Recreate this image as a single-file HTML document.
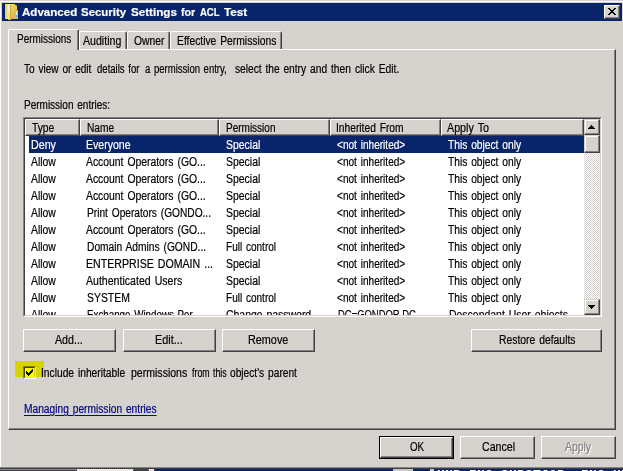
<!DOCTYPE html>
<html lang="en"><head><meta charset="utf-8"><title>Advanced Security Settings for ACL Test</title>
<style>
html,body{margin:0;padding:0}
body{width:623px;height:471px;overflow:hidden;position:relative;background:#D6D3CE;font-family:"Liberation Sans",sans-serif;font-size:11px;color:#000}
.a{position:absolute}
.t{position:absolute;white-space:pre;height:14px;line-height:14px;font-size:12px;transform-origin:0 0;word-spacing:1.2px;-webkit-text-stroke:0.2px currentColor}
.btn{position:absolute;box-sizing:border-box;background:#D6D3CE;border:1px solid;border-color:#fff #424142 #424142 #fff;box-shadow:inset -1px -1px 0 #848284}
.tab{position:absolute;box-sizing:border-box;background:#D6D3CE}
</style></head><body>
<!-- window frame -->
<div class="a" style="left:0;top:1px;width:623px;height:1px;background:#fff"></div>
<div class="a" style="left:0;top:1px;width:1px;height:466px;background:#fff"></div>
<!-- title bar -->
<div class="a" style="left:2px;top:3px;width:620px;height:18px;background:#08246B"></div>
<svg class="a" style="left:4px;top:3px" width="16" height="18" viewBox="4 3 16 18" shape-rendering="crispEdges">
<defs><linearGradient id="fl" x1="0" y1="0" x2="1" y2="0"><stop offset="0" stop-color="#E6C45A"/><stop offset="0.5" stop-color="#F9E58E"/><stop offset="1" stop-color="#F3DA78"/></linearGradient>
<linearGradient id="fr" x1="0" y1="0" x2="0.6" y2="1"><stop offset="0" stop-color="#F2D670"/><stop offset="1" stop-color="#DDB644"/></linearGradient></defs>
<rect x="5" y="4" width="6" height="15" fill="url(#fl)"/>
<rect x="11" y="4" width="6" height="15" fill="url(#fr)"/>
<rect x="15" y="4" width="2" height="1" fill="#08246B"/>
<rect x="16" y="5" width="1" height="1" fill="#9C8A4A"/>
<rect x="10" y="5" width="1" height="14" fill="#CDA83E"/>
<rect x="8" y="5" width="1" height="6" fill="#FFFBE4"/>
<rect x="9" y="6" width="1" height="8" fill="#FBEFB0"/>
<rect x="17" y="10" width="1" height="9" fill="#E3BF4E"/>
<rect x="8" y="19" width="3" height="1" fill="#D9B444"/>
<rect x="16" y="12" width="1" height="3" fill="#FFFFFF"/>
<rect x="16" y="15" width="1" height="2" fill="#4AA6E8"/>
</svg>
<!-- close button -->
<div class="btn" style="left:604px;top:5px;width:16px;height:14px"></div>
<svg class="a" style="left:608px;top:8px" width="8" height="7" viewBox="0 0 8 7"><path d="M0 0h2v1h1v1h2v-1h1v-1h2v1h-1v1h-1v1h-1v1h1v1h1v1h1v1h-2v-1h-1v-1h-2v1h-1v1h-2v-1h1v-1h1v-1h1v-1h-1v-1h-1v-1h-1z" fill="#000"/></svg>

<!-- tab panel -->
<div class="a" style="left:8px;top:49px;width:608px;height:381px;box-sizing:border-box;border:1px solid;border-color:#fff #424142 #424142 #fff;box-shadow:inset -1px -1px 0 #848284"></div>
<!-- unselected tabs -->
<div class="tab" style="left:79px;top:31px;width:48px;height:18px;border-top:1px solid #fff;border-left:1px solid #fff;border-right:1px solid #424142;box-shadow:inset -1px 0 0 #848284;border-radius:2px 2px 0 0"></div>
<div class="tab" style="left:127px;top:31px;width:43px;height:18px;border-top:1px solid #fff;border-left:1px solid #fff;border-right:1px solid #424142;box-shadow:inset -1px 0 0 #848284;border-radius:2px 2px 0 0"></div>
<div class="tab" style="left:170px;top:31px;width:112px;height:18px;border-top:1px solid #fff;border-left:1px solid #fff;border-right:1px solid #424142;box-shadow:inset -1px 0 0 #848284;border-radius:2px 2px 0 0"></div>
<!-- selected tab -->
<div class="tab" style="left:8px;top:29px;width:71px;height:21px;border-top:1px solid #fff;border-left:1px solid #fff;border-right:1px solid #424142;box-shadow:inset -1px 0 0 #848284;border-radius:2px 2px 0 0"></div>

<!-- list view -->
<div class="a" style="left:23px;top:117px;width:579px;height:200px;box-sizing:border-box;border:1px solid;border-color:#848284 #fff #fff #848284;background:#fff">
 <div class="a" style="left:0;top:0;width:577px;height:198px;box-sizing:border-box;border:1px solid;border-color:#424142 #D6D3CE #D6D3CE #424142;overflow:hidden">
  <div id="lv" class="a" style="left:0;top:0;width:575px;height:196px;overflow:hidden;background:#fff">
   <!-- header -->
   <div class="btn" style="left:0;top:0;width:55px;height:17px"></div>
   <div class="btn" style="left:55px;top:0;width:139px;height:17px"></div>
   <div class="btn" style="left:194px;top:0;width:111px;height:17px"></div>
   <div class="btn" style="left:305px;top:0;width:111px;height:17px"></div>
   <div class="btn" style="left:416px;top:0;width:143px;height:17px"></div>
   <!-- selected row -->
   <div class="a" style="left:4px;top:17px;width:555px;height:17px;background:#08246B"></div>
   <!-- scrollbar -->
   <div class="a" style="left:559px;top:0;width:16px;height:196px;background:#fff;background-image:conic-gradient(#D6D3CE 25%,#fff 0 50%,#D6D3CE 0 75%,#fff 0);background-size:2px 2px"></div>
   <div class="btn sb" style="left:559px;top:0;width:16px;height:16px;border-color:#D6D3CE #424142 #424142 #D6D3CE;box-shadow:inset -1px -1px 0 #848284,inset 1px 1px 0 #fff"></div>
   <div class="btn sb" style="left:559px;top:16px;width:16px;height:18px;border-color:#D6D3CE #424142 #424142 #D6D3CE;box-shadow:inset -1px -1px 0 #848284,inset 1px 1px 0 #fff"></div>
   <div class="btn sb" style="left:559px;top:180px;width:16px;height:16px;border-color:#D6D3CE #424142 #424142 #D6D3CE;box-shadow:inset -1px -1px 0 #848284,inset 1px 1px 0 #fff"></div>
   <svg class="a" style="left:563px;top:6px" width="7" height="4" viewBox="0 0 7 4"><path d="M3 0h1v1h1v1h1v1h1v1h-7v-1h1v-1h1v-1h1z" fill="#000"/></svg>
   <svg class="a" style="left:563px;top:186px" width="7" height="4" viewBox="0 0 7 4"><path d="M0 0h7v1h-1v1h-1v1h-1v1h-1v-1h-1v-1h-1v-1h-1z" fill="#000"/></svg>
<span class="t" style="left:7.3px;top:2px;transform:scaleX(0.8572);">Type</span>
<span class="t" style="left:62px;top:2px;transform:scaleX(0.8492);">Name</span>
<span class="t" style="left:201px;top:2px;transform:scaleX(0.8335);">Permission</span>
<span class="t" style="left:311px;top:2px;transform:scaleX(0.8526);">Inherited From</span>
<span class="t" style="left:422px;top:2px;transform:scaleX(0.8936);">Apply To</span>
<span class="t" style="left:6px;top:19px;transform:scaleX(0.8889);color:#fff;">Deny</span>
<span class="t" style="left:61px;top:19px;transform:scaleX(0.88);color:#fff;">Everyone</span>
<span class="t" style="left:201px;top:19px;transform:scaleX(0.8718);color:#fff;">Special</span>
<span class="t" style="left:312px;top:19px;transform:scaleX(0.8395);color:#fff;">&lt;not inherited&gt;</span>
<span class="t" style="left:423.2px;top:19px;transform:scaleX(0.8516);color:#fff;">This object only</span>
<span class="t" style="left:6px;top:36px;transform:scaleX(0.8621);">Allow</span>
<span class="t" style="left:61px;top:36px;transform:scaleX(0.8643);">Account Operators (GO...</span>
<span class="t" style="left:201px;top:36px;transform:scaleX(0.8718);">Special</span>
<span class="t" style="left:312px;top:36px;transform:scaleX(0.8395);">&lt;not inherited&gt;</span>
<span class="t" style="left:423.2px;top:36px;transform:scaleX(0.8516);">This object only</span>
<span class="t" style="left:6px;top:53px;transform:scaleX(0.8621);">Allow</span>
<span class="t" style="left:61px;top:53px;transform:scaleX(0.8643);">Account Operators (GO...</span>
<span class="t" style="left:201px;top:53px;transform:scaleX(0.8718);">Special</span>
<span class="t" style="left:312px;top:53px;transform:scaleX(0.8395);">&lt;not inherited&gt;</span>
<span class="t" style="left:423.2px;top:53px;transform:scaleX(0.8516);">This object only</span>
<span class="t" style="left:6px;top:70px;transform:scaleX(0.8621);">Allow</span>
<span class="t" style="left:61px;top:70px;transform:scaleX(0.8643);">Account Operators (GO...</span>
<span class="t" style="left:201px;top:70px;transform:scaleX(0.8718);">Special</span>
<span class="t" style="left:312px;top:70px;transform:scaleX(0.8395);">&lt;not inherited&gt;</span>
<span class="t" style="left:423.2px;top:70px;transform:scaleX(0.8516);">This object only</span>
<span class="t" style="left:6px;top:87px;transform:scaleX(0.8621);">Allow</span>
<span class="t" style="left:62px;top:87px;transform:scaleX(0.8469);">Print Operators (GONDO...</span>
<span class="t" style="left:201px;top:87px;transform:scaleX(0.8718);">Special</span>
<span class="t" style="left:312px;top:87px;transform:scaleX(0.8395);">&lt;not inherited&gt;</span>
<span class="t" style="left:423.2px;top:87px;transform:scaleX(0.8516);">This object only</span>
<span class="t" style="left:6px;top:104px;transform:scaleX(0.8621);">Allow</span>
<span class="t" style="left:61px;top:104px;transform:scaleX(0.8643);">Account Operators (GO...</span>
<span class="t" style="left:201px;top:104px;transform:scaleX(0.8718);">Special</span>
<span class="t" style="left:312px;top:104px;transform:scaleX(0.8395);">&lt;not inherited&gt;</span>
<span class="t" style="left:423.2px;top:104px;transform:scaleX(0.8516);">This object only</span>
<span class="t" style="left:6px;top:121px;transform:scaleX(0.8621);">Allow</span>
<span class="t" style="left:62px;top:121px;transform:scaleX(0.8519);">Domain Admins (GOND...</span>
<span class="t" style="left:201px;top:121px;transform:scaleX(0.8358);">Full control</span>
<span class="t" style="left:312px;top:121px;transform:scaleX(0.8395);">&lt;not inherited&gt;</span>
<span class="t" style="left:423.2px;top:121px;transform:scaleX(0.8516);">This object only</span>
<span class="t" style="left:6px;top:138px;transform:scaleX(0.8621);">Allow</span>
<span class="t" style="left:61px;top:138px;transform:scaleX(0.8839);">ENTERPRISE DOMAIN ...</span>
<span class="t" style="left:201px;top:138px;transform:scaleX(0.8718);">Special</span>
<span class="t" style="left:312px;top:138px;transform:scaleX(0.8395);">&lt;not inherited&gt;</span>
<span class="t" style="left:423.2px;top:138px;transform:scaleX(0.8516);">This object only</span>
<span class="t" style="left:6px;top:155px;transform:scaleX(0.8621);">Allow</span>
<span class="t" style="left:61px;top:155px;transform:scaleX(0.8809);">Authenticated Users</span>
<span class="t" style="left:201px;top:155px;transform:scaleX(0.8718);">Special</span>
<span class="t" style="left:312px;top:155px;transform:scaleX(0.8395);">&lt;not inherited&gt;</span>
<span class="t" style="left:423.2px;top:155px;transform:scaleX(0.8516);">This object only</span>
<span class="t" style="left:6px;top:172px;transform:scaleX(0.8621);">Allow</span>
<span class="t" style="left:61.5px;top:172px;transform:scaleX(0.8678);">SYSTEM</span>
<span class="t" style="left:201px;top:172px;transform:scaleX(0.8358);">Full control</span>
<span class="t" style="left:312px;top:172px;transform:scaleX(0.8395);">&lt;not inherited&gt;</span>
<span class="t" style="left:423.2px;top:172px;transform:scaleX(0.8516);">This object only</span>
<span class="t" style="left:6px;top:189px;transform:scaleX(0.8621);">Allow</span>
<span class="t" style="left:62px;top:189px;transform:scaleX(0.8148);">Exchange Windows Per...</span>
<span class="t" style="left:200.5px;top:189px;transform:scaleX(0.8697);">Change password</span>
<span class="t" style="left:312.5px;top:189px;transform:scaleX(0.7862);">DC=GONDOR,DC...</span>
<span class="t" style="left:423.5px;top:189px;transform:scaleX(0.8714);">Descendant User objects</span>
  </div>
 </div>
</div>

<!-- buttons -->
<div class="btn" style="left:23px;top:329px;width:93px;height:23px"></div>
<div class="btn" style="left:123px;top:329px;width:93px;height:23px"></div>
<div class="btn" style="left:222px;top:329px;width:93px;height:23px"></div>
<div class="btn" style="left:471px;top:329px;width:131px;height:23px"></div>

<!-- checkbox -->
<div class="a" style="left:23px;top:366px;width:13px;height:13px;box-sizing:border-box;border:1px solid;border-color:#848284 #fff #fff #848284;background:#fff"><div class="a" style="left:0;top:0;width:11px;height:11px;box-sizing:border-box;border:1px solid;border-color:#424142 #D6D3CE #D6D3CE #424142"></div>
<svg class="a" style="left:2px;top:2px" width="7" height="7" viewBox="0 0 7 7"><path d="M0 2v3M1 3v3M2 4v3M3 3v3M4 2v3M5 1v3M6 0v3" stroke="#000" stroke-width="1" transform="translate(.5 0)"/></svg></div>

<!-- OK / Cancel / Apply -->
<div class="a" style="left:379px;top:436px;width:75px;height:23px;box-sizing:border-box;border:1px solid #000"><div class="btn" style="left:0;top:0;width:73px;height:21px"></div></div>
<div class="btn" style="left:460px;top:436px;width:75px;height:23px"></div>
<div class="btn" style="left:541px;top:436px;width:75px;height:23px"></div>

<span class="t" style="left:22px;top:4.6px;transform:scaleX(1.0041);font-size:11.5px;color:#fff;font-weight:bold;-webkit-text-stroke:0.2px #fff;">Advanced</span>
<span class="t" style="left:81.3px;top:4.6px;transform:scaleX(0.9953);font-size:11.5px;color:#fff;font-weight:bold;-webkit-text-stroke:0.2px #fff;">Security</span>
<span class="t" style="left:131px;top:4.6px;transform:scaleX(1.0116);font-size:11.5px;color:#fff;font-weight:bold;-webkit-text-stroke:0.2px #fff;">Settings</span>
<span class="t" style="left:181px;top:4.6px;transform:scaleX(0.9221);font-size:11.5px;color:#fff;font-weight:bold;-webkit-text-stroke:0.2px #fff;">for</span>
<span class="t" style="left:199.7px;top:4.6px;transform:scaleX(0.8276);font-size:11.5px;color:#fff;font-weight:bold;-webkit-text-stroke:0.2px #fff;">ACL</span>
<span class="t" style="left:224.4px;top:4.6px;transform:scaleX(1.021);font-size:11.5px;color:#fff;font-weight:bold;-webkit-text-stroke:0.2px #fff;">Test</span>
<span class="t" style="left:17px;top:32px;transform:scaleX(0.8298);">Permissions</span>
<span class="t" style="left:83px;top:34px;transform:scaleX(0.8837);">Auditing</span>
<span class="t" style="left:134px;top:34px;transform:scaleX(0.8603);">Owner</span>
<span class="t" style="left:177px;top:34px;transform:scaleX(0.859);">Effective Permissions</span>
<span class="t" style="left:24px;top:62px;transform:scaleX(0.8395);">To view or edit</span>
<span class="t" style="left:97.3px;top:62px;transform:scaleX(0.7961);">details for</span>
<span class="t" style="left:144.7px;top:62px;transform:scaleX(0.7946);">a permission entry,</span>
<span class="t" style="left:235.3px;top:62px;transform:scaleX(0.8486);">select the entry</span>
<span class="t" style="left:310.4px;top:62px;transform:scaleX(0.8558);">and then click Edit.</span>
<span class="t" style="left:24px;top:98px;transform:scaleX(0.8336);">Permission entries:</span>
<span class="t" style="left:55px;top:333px;transform:scaleX(0.8874);">Add...</span>
<span class="t" style="left:155.3px;top:333px;transform:scaleX(0.9064);">Edit...</span>
<span class="t" style="left:248px;top:333px;transform:scaleX(0.9028);">Remove</span>
<span class="t" style="left:499px;top:333px;transform:scaleX(0.8636);">Restore defaults</span>
<span class="t" style="left:41px;top:366px;transform:scaleX(0.8545);">Include inheritable</span>
<span class="t" style="left:130.7px;top:366px;transform:scaleX(0.8788);">permissions</span>
<span class="t" style="left:191.5px;top:366px;transform:scaleX(0.7337);">from this</span>
<span class="t" style="left:230.3px;top:366px;transform:scaleX(0.8485);">object's parent</span>
<span class="t" style="left:23.6px;top:401.5px;transform:scaleX(0.8509);color:#000090;text-decoration:underline;text-underline-offset:2px;text-decoration-thickness:1px;">Managing permission entries</span>
<span class="t" style="left:410px;top:440px;transform:scaleX(0.8121);">OK</span>
<span class="t" style="left:481.5px;top:440px;transform:scaleX(0.8854);">Cancel</span>
<span class="t" style="left:566px;top:441px;transform:scaleX(0.8684);color:#fff;">Apply</span>
<span class="t" style="left:565px;top:440px;transform:scaleX(0.8684);color:#848284;">Apply</span>

<!-- yellow highlight -->
<div class="a" style="left:15px;top:361px;width:29px;height:16px;background:#FFFF00;mix-blend-mode:multiply"></div>

<!-- bottom strip (things behind the dialog) -->
<div class="a" style="left:0;top:467px;width:623px;height:1px;background:#848284"></div>
<div class="a" style="left:0;top:468px;width:623px;height:1px;background:#424142"></div>
<div class="a" style="left:0;top:469px;width:623px;height:2px;background:#08246B;overflow:hidden"><span class="a" style="left:437px;top:0;font:bold 13px/13px 'Liberation Mono',monospace;color:#fff;white-space:pre;letter-spacing:0.2px">UNP ING $UPSTJOB  ING UI</span>
<div class="a" style="left:393px;top:0;width:20px;height:2px;background:#C8C8C8"></div><div class="a" style="left:430px;top:0;width:4px;height:2px;background:#C8C8C8"></div></div>
<div class="a" style="left:0;top:469px;width:155px;height:1px;background:#848284"></div>
<div class="a" style="left:0;top:470px;width:155px;height:1px;background:#424142"></div>
<div class="a" style="left:77px;top:469px;width:56px;height:2px;background-image:conic-gradient(#D6D3CE 25%,#fff 0 50%,#D6D3CE 0 75%,#fff 0);background-size:2px 2px"></div>
<div class="a" style="left:134px;top:469px;width:14px;height:2px;background:#424142"></div>
<div class="a" style="left:149px;top:469px;width:5px;height:2px;background:#E8E8E8"></div>
<div class="a" style="left:154px;top:469px;width:1px;height:2px;background:#424142"></div>
</body></html>
